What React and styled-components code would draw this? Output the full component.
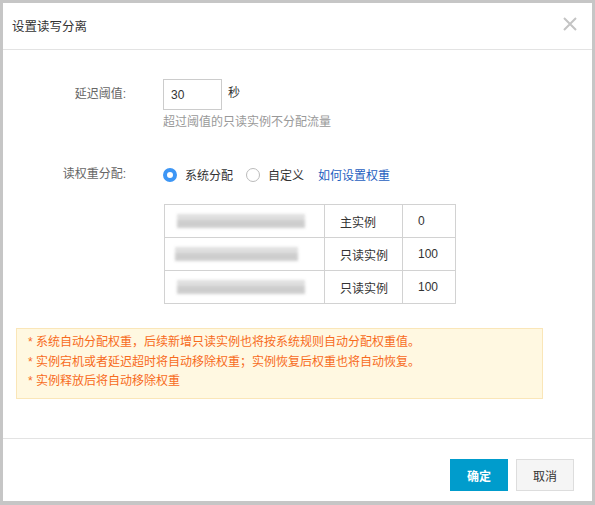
import React, { useState } from 'react';
import styled, { createGlobalStyle } from 'styled-components';

const GlobalStyle = createGlobalStyle`
  html, body {
    margin: 0;
    padding: 0;
    background: #c6c6c6;
    font-family: "Helvetica Neue", "Liberation Sans", "Noto Sans CJK SC", sans-serif;
    font-size: 12px;
    color: #333;
  }
`;

const rows = [
  { role: '主实例', weight: 0 },
  { role: '只读实例', weight: 100 },
  { role: '只读实例', weight: 100 },
];

const notes = [
  '系统自动分配权重，后续新增只读实例也将按系统规则自动分配权重值。',
  '实例宕机或者延迟超时将自动移除权重；实例恢复后权重也将自动恢复。',
  '实例释放后将自动移除权重',
];

const App = () => {
  const [mode, setMode] = useState('system');
  const [delay, setDelay] = useState('30');

  return (
    <>
      <GlobalStyle />
      <Frame>
        <Modal>
          <Header>
            <Title>设置读写分离</Title>
            <Close aria-label="close">
              <svg width="14" height="14" viewBox="0 0 14 14">
                <path d="M1 1L13 13M13 1L1 13" stroke="#c4c4c4" strokeWidth="2" />
              </svg>
            </Close>
          </Header>

          <Body>
            <FormRow>
              <Label>延迟阈值:</Label>
              <Field>
                <InputLine>
                  <Input value={delay} onChange={e => setDelay(e.target.value)} />
                  <Unit>秒</Unit>
                </InputLine>
                <Hint>超过阈值的只读实例不分配流量</Hint>
              </Field>
            </FormRow>

            <FormRow $top={28}>
              <Label>读权重分配:</Label>
              <Field>
                <RadioLine>
                  <RadioItem onClick={() => setMode('system')}>
                    <Radio $checked={mode === 'system'} />
                    系统分配
                  </RadioItem>
                  <RadioItem onClick={() => setMode('custom')}>
                    <Radio $checked={mode === 'custom'} />
                    自定义
                  </RadioItem>
                  <Link href="#">如何设置权重</Link>
                </RadioLine>
                <Table>
                  <tbody>
                    {rows.map((r, i) => (
                      <tr key={i}>
                        <NameCell>
                          <Blur $shift={i} />
                        </NameCell>
                        <RoleCell>{r.role}</RoleCell>
                        <WeightCell>{r.weight}</WeightCell>
                      </tr>
                    ))}
                  </tbody>
                </Table>
              </Field>
            </FormRow>

            <Notice>
              {notes.map((n, i) => (
                <NoticeLine key={i}>* {n}</NoticeLine>
              ))}
            </Notice>
          </Body>

          <Footer>
            <PrimaryButton>确定</PrimaryButton>
            <Button>取消</Button>
          </Footer>
        </Modal>
      </Frame>
    </>
  );
};

export default App;

const Frame = styled.div`
  padding: 3px 3px 4px 3px;
  width: 595px;
  height: 505px;
  box-sizing: border-box;
`;
const Modal = styled.div`
  background: #fff;
  height: 100%;
  display: flex;
  flex-direction: column;
`;
const Header = styled.div`
  height: 46px;
  border-bottom: 1px solid #e3e3e3;
  display: flex;
  align-items: center;
  justify-content: space-between;
  padding: 0 15px 0 9px;
  flex-shrink: 0;
`;
const Title = styled.div`
  font-size: 12.5px;
  color: #333;
  padding-bottom: 2px;
`;
const Close = styled.div`
  width: 14px;
  height: 14px;
  display: flex;
  cursor: pointer;
  margin-bottom: 4px;
`;
const Body = styled.div`
  flex: 1;
  padding: 29px 0 0 13px;
`;
const FormRow = styled.div`
  display: flex;
  margin-top: ${p => p.$top || 0}px;
`;
const Label = styled.div`
  width: 110px;
  text-align: right;
  color: #666;
  padding-right: 37px;
  line-height: 31px;
  flex-shrink: 0;
`;
const Field = styled.div`
  display: flex;
  flex-direction: column;
`;
const InputLine = styled.div`
  display: flex;
  align-items: flex-start;
`;
const Input = styled.input`
  width: 59px;
  height: 31px;
  box-sizing: border-box;
  border: 1px solid #ccc;
  padding: 0 7px;
  font-size: 12px;
  font-family: inherit;
  color: #333;
  outline: none;
`;
const Unit = styled.span`
  margin-left: 6px;
  line-height: 29px;
`;
const Hint = styled.div`
  color: #999;
  margin-top: 4px;
  line-height: 17px;
`;
const RadioLine = styled.div`
  display: flex;
  align-items: center;
  height: 31px;
`;
const RadioItem = styled.label`
  display: flex;
  align-items: center;
  margin-right: 13px;
  cursor: pointer;
`;
const Radio = styled.span`
  width: 14px;
  height: 14px;
  border-radius: 50%;
  box-sizing: border-box;
  margin-right: 8px;
  border: ${p => (p.$checked ? '4.5px solid #3d96f5' : '1px solid #bbb')};
  background: #fff;
`;
const Link = styled.a`
  color: #1f5fbf;
  text-decoration: none;
  margin-left: 1px;
`;
const Table = styled.table`
  border-collapse: collapse;
  margin-top: 14px;
  margin-left: 1px;
  td {
    border: 1px solid #d2d2d2;
    height: 32px;
    padding: 0;
  }
`;
const NameCell = styled.td`
  width: 159px;
`;
const Blur = styled.div`
  margin-left: ${p => 12 + (p.$shift === 1 ? -2 : 0)}px;
  width: ${p => (p.$shift === 1 ? 123 : 128)}px;
  height: 14px;
  background: linear-gradient(to bottom, #dcdcdc 0 45%, #c8c8c8 45% 100%);
  filter: blur(1.5px);
  opacity: 0.9;
`;
const RoleCell = styled.td`
  width: 62px;
  padding-left: 15px !important;
`;
const WeightCell = styled.td`
  width: 37px;
  padding-left: 15px !important;
`;
const Notice = styled.div`
  margin-top: 24px;
  width: 527px;
  box-sizing: border-box;
  background: #fff8e1;
  border: 1px solid #fae6b8;
  padding: 4px 11px 6px;
  color: #f76b1c;
`;
const NoticeLine = styled.div`
  line-height: 19.5px;
`;
const Footer = styled.div`
  border-top: 1px solid #e3e3e3;
  height: 63px;
  box-sizing: border-box;
  display: flex;
  justify-content: flex-end;
  align-items: flex-start;
  padding: 20px 18px 0 0;
  gap: 8px;
  flex-shrink: 0;
`;
const Button = styled.button`
  width: 58px;
  height: 32px;
  border: 1px solid #ddd;
  background: #f5f5f5;
  color: #333;
  font-size: 12px;
  font-family: inherit;
  cursor: pointer;
`;
const PrimaryButton = styled(Button)`
  border-color: #009ccc;
  background: #009ccc;
  color: #fff;
  font-weight: bold;
`;
